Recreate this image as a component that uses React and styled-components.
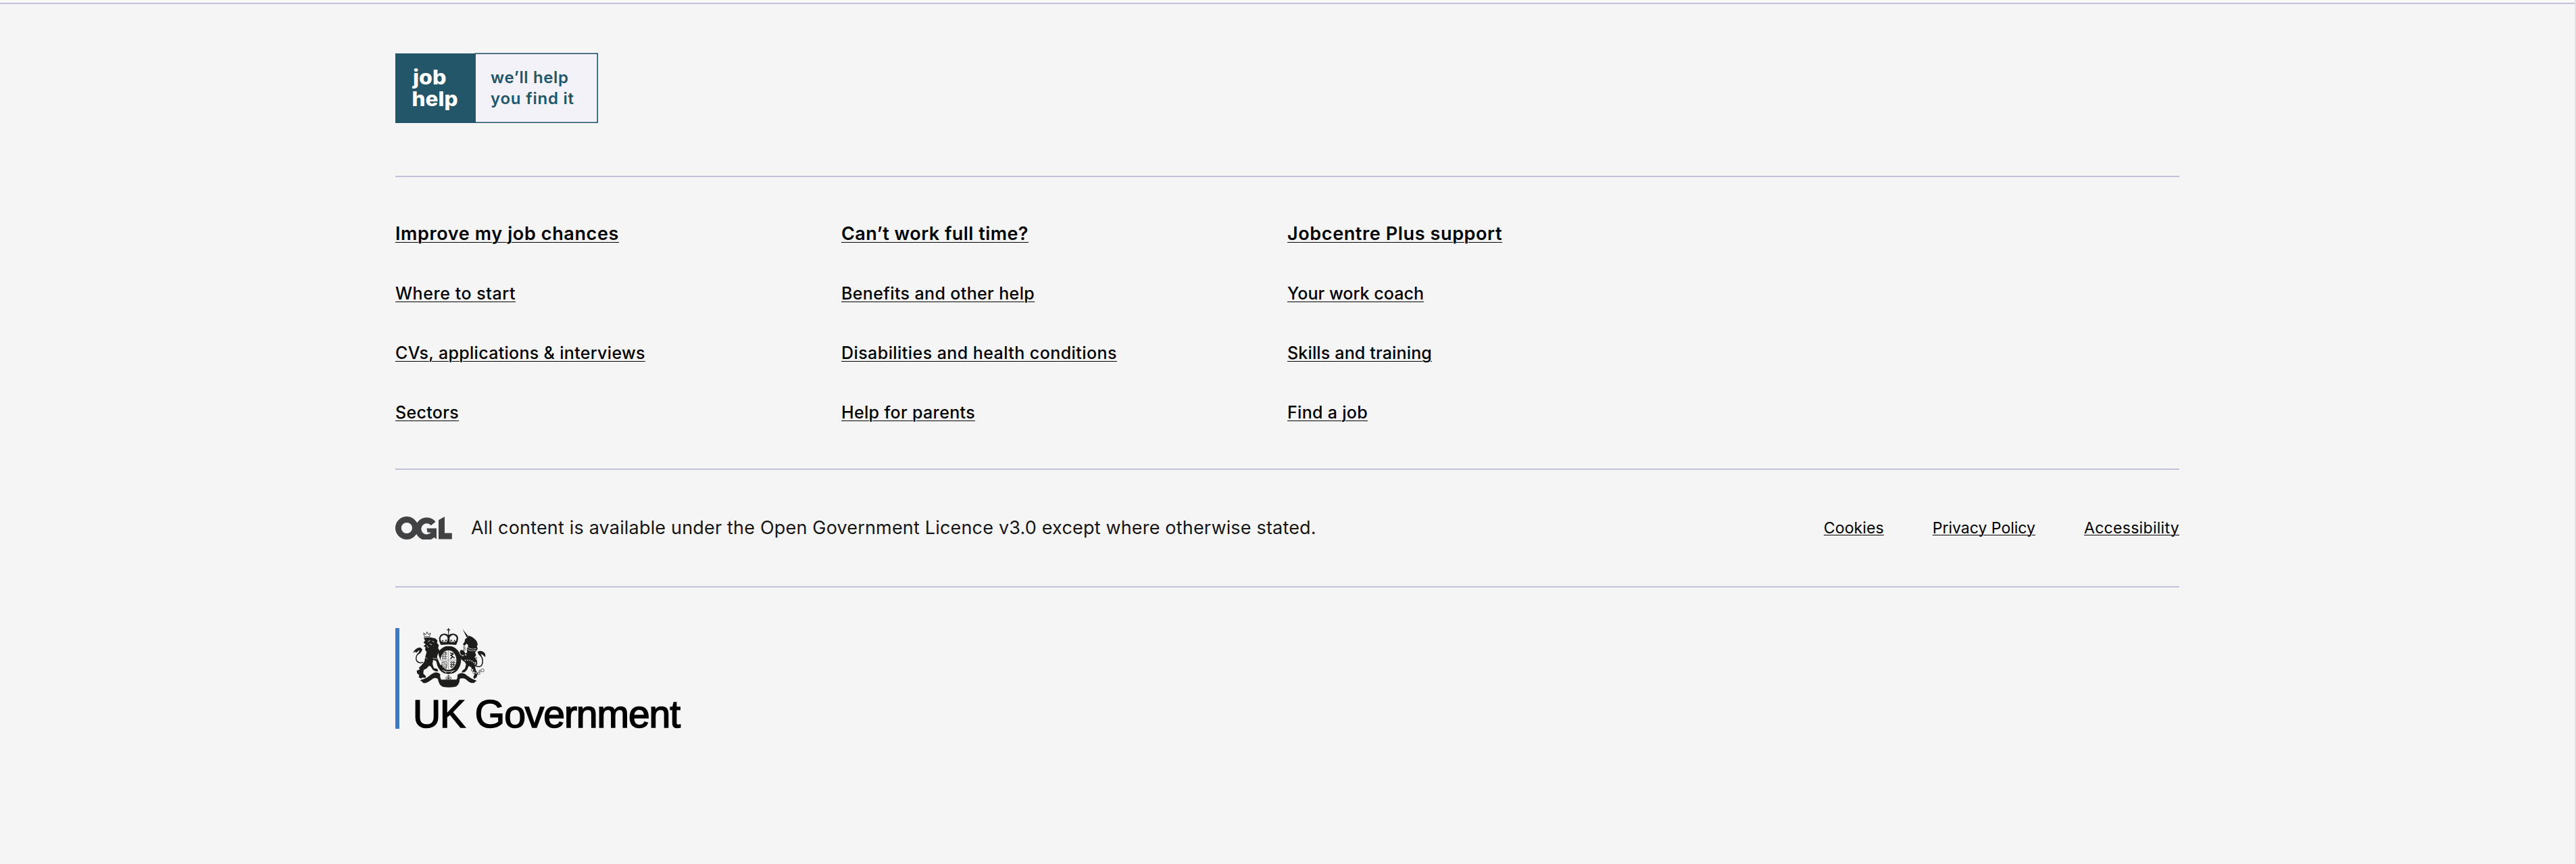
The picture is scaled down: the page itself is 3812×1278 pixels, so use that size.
import React from 'react';
import styled, { createGlobalStyle } from 'styled-components';

const Base = createGlobalStyle`
  body { margin: 0; background: #f5f5f5; }
  * { box-sizing: border-box; }
`;

const Page = styled.div`
  min-height: 1278px;
  padding-top: 4px;
  background: #f8f8f8;
  border-right: 2px solid #e3e3e3;
  font-family: Inter, "Liberation Sans", sans-serif;
  color: #000;
`;

const Footer = styled.footer`
  min-height: 1274px;
  border-top: 2px solid #c4c1dc;
  background: #f5f5f5;
  padding: 72px 0 0 585px;
`;

const Container = styled.div`
  width: 2640px;
`;

const LogoRow = styled.div`
  height: 182px;
`;

const LogoSvg = styled.svg`
  display: block;
`;

const Columns = styled.nav`
  display: grid;
  grid-template-columns: repeat(4, 660px);
  border-top: 2px solid #c1c1dc;
  padding-top: 64px;
  height: 433px;
`;

const Column = styled.div`
  display: flex;
  flex-direction: column;
  align-items: flex-start;
  gap: 48px;
`;

const NavLink = styled.a`
  color: #000;
  font-size: ${(p) => (p.$heading ? 27 : 25)}px;
  font-weight: ${(p) => (p.$heading ? 600 : 500)};
  line-height: 40px;
  letter-spacing: ${(p) => p.$track}px;
  white-space: nowrap;
  text-decoration: underline;
  text-decoration-thickness: 1px;
  text-underline-offset: 3px;
`;

const LegalRow = styled.div`
  display: flex;
  align-items: center;
  height: 176px;
  border-top: 2px solid #c1c1dc;
  border-bottom: 2px solid #c1c1dc;
`;

const Licence = styled.p`
  margin: 0 0 0 28px;
  color: #161616;
  font-size: 27px;
  line-height: 40px;
  letter-spacing: 0.18px;
  white-space: nowrap;
`;

const LegalLinks = styled.div`
  display: flex;
  gap: 72px;
  margin-left: auto;
`;

const LegalLink = styled.a`
  color: #000;
  font-size: 23px;
  line-height: 40px;
  letter-spacing: ${(p) => p.$track}px;
  text-decoration: underline;
  text-decoration-thickness: 1px;
  text-underline-offset: 2px;
`;

const Government = styled.div`
  display: flex;
  flex-direction: column;
  height: 149px;
  margin-top: 60px;
  padding-left: 20px;
  border-left: 6px solid #3f78c4;
`;

const CrestSvg = styled.svg`
  display: block;
  flex: none;
`;

const GovernmentName = styled.span`
  margin: 6px 0 0 0;
  font-family: "Liberation Sans", Arial, sans-serif;
  font-size: 57px;
  line-height: 64px;
  letter-spacing: -1.05px;
  -webkit-text-stroke: 1.6px #000;
  white-space: nowrap;
`;

const columns = [
  [
    ['Improve my job chances', 0.62],
    ['Where to start', 0.55],
    ['CVs, applications & interviews', 0.31],
    ['Sectors', 0.33],
  ],
  [
    ['Can’t work full time?', 0.46],
    ['Benefits and other help', 0.37],
    ['Disabilities and health conditions', 0.435],
    ['Help for parents', 0.34],
  ],
  [
    ['Jobcentre Plus support', 0.62],
    ['Your work coach', 0.05],
    ['Skills and training', 0.16],
    ['Find a job', 0.31],
  ],
];

const legal = [
  ['Cookies', 0.12],
  ['Privacy Policy', 0],
  ['Accessibility', 0.3],
];

function JobHelpLogo() {
  return (
    <LogoSvg width="300" height="104" viewBox="0 0 300 104">
      <rect x="118" y="1.25" width="181.2" height="102" fill="#f3f2f8" stroke="#225668" strokeWidth="1.6" />
      <rect x="0" y="1" width="119" height="103" fill="#225668" />
      <g fill="#fff" fontFamily="Inter, sans-serif" fontWeight="800" fontSize="30">
        <text x="26" y="47" textLength="49.5" lengthAdjust="spacingAndGlyphs">job</text>
        <text x="24.5" y="79" textLength="68" lengthAdjust="spacingAndGlyphs">help</text>
      </g>
      <g fill="#225668" fontFamily="Inter, sans-serif" fontWeight="600" fontSize="24">
        <text x="141" y="45" textLength="115" lengthAdjust="spacing">we’ll help</text>
        <text x="141" y="76" textLength="123" lengthAdjust="spacing">you find it</text>
      </g>
    </LogoSvg>
  );
}

function OglMark() {
  return (
    <LogoSvg width="84" height="34" viewBox="0 0 84 34">
      <g fill="none" stroke="#414243" strokeWidth="8.8">
        <circle cx="16.9" cy="17" r="12.5" />
        <path d="M56.2 10.6A12.5 12.5 0 1 0 57 25" />
      </g>
      <path d="M46.5 17.5H61V33.6L55.5 29.5L53 23.5H47.5ZM64 5.2L73 .2V24.6H83.8V33.6H64Z" fill="#414243" />
    </LogoSvg>
  );
}

function Crest() {
  return (
    <CrestSvg width="109" height="89" viewBox="18 21 327 267">
      <g fill="#1d1d1b" stroke="none">
        <path d="M66 64L96 62L117 67L127 76L125 88L133 96L130 110L137 122L132 145L140 166L147 174L145 187L138 189L136 179L120 167L108 162L105 180L111 199L126 202L131 213L118 213L107 207L96 190L88 190L79 200L66 207L64 223L76 235L74 242L59 241L56 245L44 240L46 229L37 223L35 210L48 205L45 197L58 184L69 170L74 145L79 128L72 116L74 106L65 101L75 94L65 85L72 77Z" />
        <path d="M19 131Q23 117 38 110Q53 103 60 116Q55 132 42 138Q48 126 46 119Q37 130 28 130L31 124Z" />
        <path d="M249 72L266 55L280 60L291 68L301 79L306 94L302 101L306 113L294 130L299 141L292 151L303 166L304 181L294 193L297 207L306 222L301 239L290 247L286 238L292 226L282 211L277 195L266 189L258 207L248 217L235 218L237 211L249 201L254 184L250 173L235 162L226 151L218 145L220 138L230 141L240 148L229 136L226 126L231 118L243 120L252 134L259 128L257 113L264 99L257 90L246 100L240 94L248 81Z" />
        <path d="M308 124Q324 118 335 130Q342 138 339 150Q328 138 319 135Q325 143 322 149Q309 141 305 130Z" />
        <path d="M239 26L264 58L256 61Z" />
        <path d="M134 67Q137 48 155 46Q168 45 176 53Q184 45 200 46Q219 50 219 68Q218 80 211 94L203 101H149L141 94Q134 82 134 67Z" />
        <ellipse cx="177" cy="163" rx="55" ry="63" />
        <path d="M50 252Q78 247 96 229Q122 208 139 225Q137 236 143 250H212Q218 241 216 228Q232 214 250 225Q277 248 301 254L289 265Q273 266 263 257Q245 238 226 246Q225 277 204 282Q179 286 151 282Q133 275 129 247Q117 236 99 251Q79 267 65 265Z" />
      </g>
      <g fill="none" stroke="#1d1d1b" strokeWidth="4.5" strokeLinecap="round">
        <path d="M48 128Q27 145 34 165Q45 180 62 173" />
        <path d="M318 141Q335 164 323 187Q309 197 297 188" />
        <path d="M176 23V42M170 29H182" strokeWidth="4" />
        <path d="M66 43L69 59H92L96 43L87 50L81 38L75 50Z" fill="#f5f5f5" strokeWidth="2.5" />
      </g>
      <g fill="#f5f5f5">
        <path d="M140 69Q142 55 155 52Q169 53 172 64L171 84H148Q140 78 140 69ZM181 64Q187 52 199 52Q212 57 212 68Q211 80 204 84H181Z" />
        <path d="M142 96Q176 91 211 96L208 104Q176 98 145 104Z" />
        <ellipse cx="176" cy="163" rx="35" ry="43" />
        <path d="M146 232Q146 222 158 222L175 225L198 222Q209 223 210 232L206 246H150Z" />
        <path d="M130 131L135 149L148 182L140 185L125 151Z" />
      </g>
      <g fill="none" stroke="#f5f5f5" strokeWidth="2.5" strokeLinecap="round">
        <path d="M86 81L94 76M105 79L111 83M93 91L102 95M80 99L87 108" />
        <path d="M77 216L89 206M64 145L82 158M108 155L125 158" strokeWidth="2" />
        <path d="M256 104Q279 119 298 112M253 111Q273 126 295 121" strokeDasharray="3 4" strokeWidth="3" />
        <path d="M250 164Q281 158 296 185" strokeDasharray="2 8" strokeWidth="4" />
        <path d="M150 209Q176 221 203 209M158 214L166 218M187 218L196 213" />
      </g>
      <g fill="none" stroke="#1d1d1b" strokeWidth="3">
        <path d="M176 120V205M141 163H211" strokeWidth="4" stroke="#aaa" />
        <path d="M151 137H170M146 147H171M148 156H170M155 130H171M151 132V157M162 126V157" strokeDasharray="5 2" />
        <path d="M184 130L198 139M184 140L203 154M197 131L188 145M194 148L185 157" strokeWidth="5" />
        <path d="M184 173H207M184 183H204M184 193H199M189 169V198M199 169V190" strokeDasharray="6 2" strokeWidth="4" />
        <path d="M147 171Q145 193 166 201Q171 189 169 170ZM151 172L169 195M157 172L168 187M151 181L164 198" strokeWidth="2" />
        <path d="M146 84L150 74L154 84M160 84L165 72L170 84M183 84L188 72L193 84M199 84L203 74L207 84M176 45V88" strokeWidth="3" />
        <path d="M176 230V252M176 230L169 238L176 246L184 238ZM166 239Q160 245 168 248Q177 244 176 240Q177 246 186 248Q193 243 185 239" strokeWidth="2.5" />
      </g>
      <g fill="#f5f5f5" stroke="#1d1d1b" strokeWidth="2">
        <circle cx="246" cy="106" r="4" />
        <circle cx="247" cy="116" r="4" />
        <circle cx="252" cy="140" r="4" />
        <circle cx="240" cy="143" r="4" />
        <circle cx="296" cy="176" r="4" />
        <circle cx="299" cy="154" r="3.5" />
        <circle cx="282" cy="207" r="5" />
        <circle cx="289" cy="218" r="5" />
        <circle cx="299" cy="221" r="4" />
        <circle cx="311" cy="222" r="5" />
        <circle cx="327" cy="209" r="7" />
        <circle cx="315" cy="212" r="4" />
      </g>
    </CrestSvg>
  );
}

export default function App() {
  return (
    <Page>
      <Base />
      <Footer>
        <Container>
          <LogoRow>
            <JobHelpLogo />
          </LogoRow>
          <Columns>
            {columns.map((items) => (
              <Column key={items[0][0]}>
                {items.map(([label, track], i) => (
                  <NavLink key={label} $heading={i === 0} $track={track}>{label}</NavLink>
                ))}
              </Column>
            ))}
          </Columns>
          <LegalRow>
            <OglMark />
            <Licence>All content is available under the Open Government Licence v3.0 except where otherwise stated.</Licence>
            <LegalLinks>
              {legal.map(([label, track]) => (
                <LegalLink key={label} $track={track}>{label}</LegalLink>
              ))}
            </LegalLinks>
          </LegalRow>
          <Government>
            <Crest />
            <GovernmentName>UK Government</GovernmentName>
          </Government>
        </Container>
      </Footer>
    </Page>
  );
}
